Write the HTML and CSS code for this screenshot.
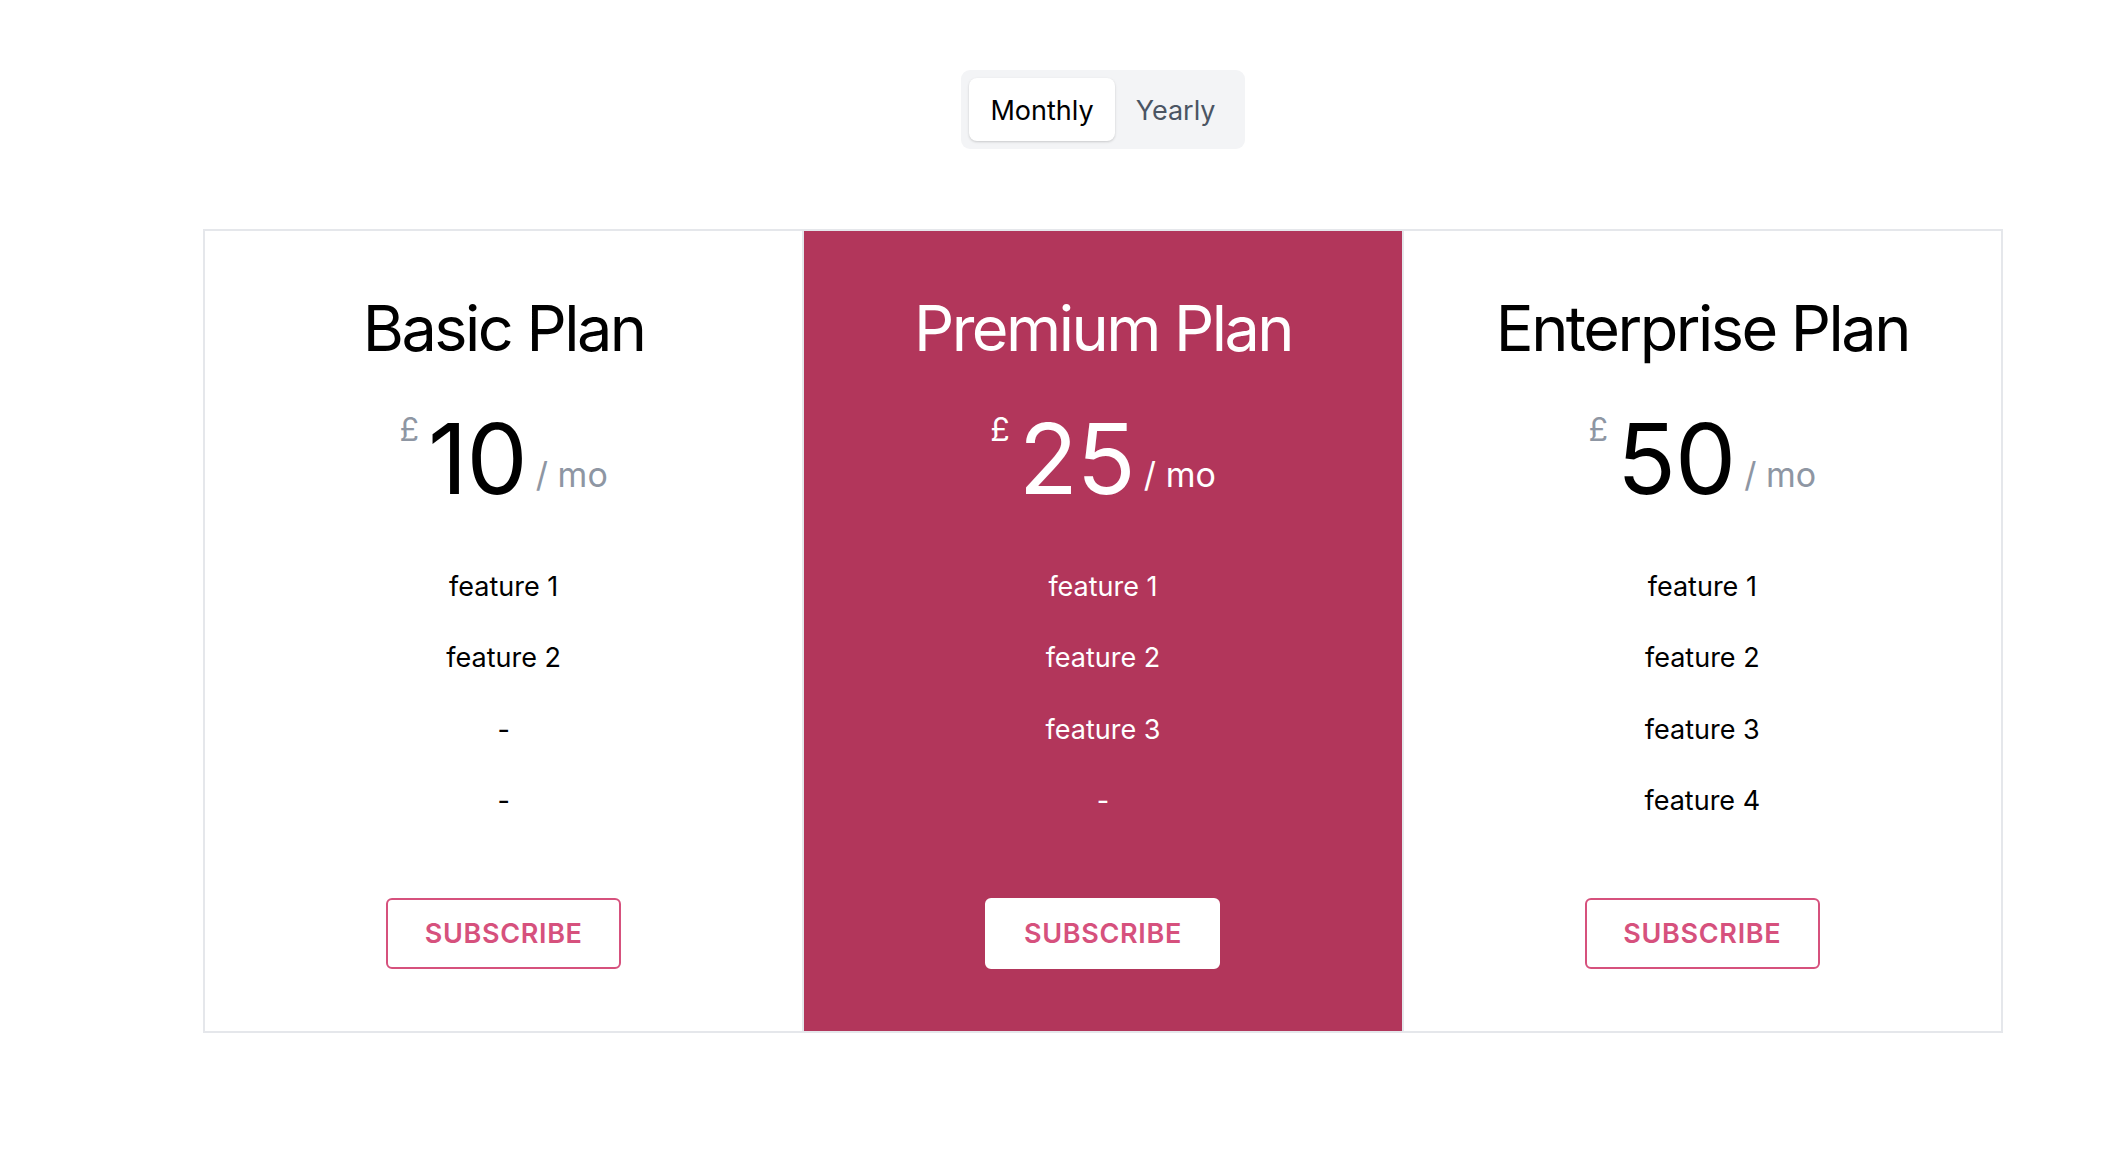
FILE: index.html
```html
<!DOCTYPE html>
<html lang="en">
<head>
<meta charset="utf-8">
<title>Pricing</title>
<link rel="stylesheet" href="styles.css">
</head>
<body>
<main class="page">
  <div class="toggle">
    <button class="toggle-btn active">Monthly</button>
    <button class="toggle-btn">Yearly</button>
  </div>

  <section class="plans">
    <div class="plan">
      <h2 class="plan-title">Basic Plan</h2>
      <div class="price">
        <span class="currency">£</span>
        <span class="amount">10</span>
        <span class="period">/ mo</span>
      </div>
      <ul class="features">
        <li>feature 1</li>
        <li>feature 2</li>
        <li>-</li>
        <li>-</li>
      </ul>
      <button class="subscribe">SUBSCRIBE</button>
    </div>

    <div class="plan featured">
      <h2 class="plan-title">Premium Plan</h2>
      <div class="price">
        <span class="currency">£</span>
        <span class="amount">25</span>
        <span class="period">/ mo</span>
      </div>
      <ul class="features">
        <li>feature 1</li>
        <li>feature 2</li>
        <li>feature 3</li>
        <li>-</li>
      </ul>
      <button class="subscribe">SUBSCRIBE</button>
    </div>

    <div class="plan">
      <h2 class="plan-title">Enterprise Plan</h2>
      <div class="price">
        <span class="currency">£</span>
        <span class="amount">50</span>
        <span class="period">/ mo</span>
      </div>
      <ul class="features">
        <li>feature 1</li>
        <li>feature 2</li>
        <li>feature 3</li>
        <li>feature 4</li>
      </ul>
      <button class="subscribe">SUBSCRIBE</button>
    </div>
  </section>
</main>
</body>
</html>
```

FILE: styles.css
```css
* { box-sizing: border-box; }

html, body {
  margin: 0;
  padding: 0;
  background: #ffffff;
}

body {
  font-family: Inter, "Noto Sans", "Liberation Sans", sans-serif;
  color: #000000;
}

.page {
  display: flex;
  flex-direction: column;
  align-items: center;
  padding: 70px 0 0 82px;
}

.toggle {
  display: flex;
  background: #f3f4f6;
  border-radius: 9px;
  padding: 8px;
}

.toggle-btn {
  font-family: inherit;
  font-size: 27px;
  line-height: 39px;
  padding: 13px 21px 11px;
  border: 0;
  border-radius: 8px;
  background: transparent;
  color: #4b5563;
  cursor: pointer;
}

.toggle-btn.active {
  background: #ffffff;
  color: #000000;
  box-shadow: 0 1px 3px rgba(0, 0, 0, 0.12), 0 1px 2px rgba(0, 0, 0, 0.06);
}

.plans {
  margin-top: 80px;
  width: 1800px;
  border: 2px solid #e5e7eb;
  background: #e5e7eb;
  display: grid;
  grid-template-columns: repeat(3, 1fr);
  gap: 2px;
}

.plan {
  background: #ffffff;
  display: flex;
  flex-direction: column;
  align-items: center;
  padding: 65px 0 62px;
  text-align: center;
}

.plan.featured {
  background: #b2365b;
  color: #ffffff;
}

.plan-title {
  margin: 0;
  font-size: 63px;
  line-height: 64.8px;
  font-weight: 400;
  letter-spacing: -0.04em;
}

.price {
  margin-top: 49px;
  display: flex;
  align-items: flex-start;
  height: 97px;
}

.currency {
  font-size: 32px;
  line-height: 1;
  margin-top: 4px;
  margin-right: 9px;
  color: #8e96a3;
}

.amount {
  font-size: 97px;
  line-height: 1;
  letter-spacing: -0.01em;
}

.period {
  align-self: flex-end;
  font-size: 34px;
  line-height: 1;
  margin-left: 9px;
  margin-bottom: 15px;
  color: #8e96a3;
}

.featured .currency,
.featured .period {
  color: #ffffff;
}

.features {
  list-style: none;
  margin: 44px 0 0;
  padding: 0;
}

.features li {
  font-size: 27px;
  line-height: 36px;
  padding: 17.75px 0;
}

.subscribe {
  margin-top: 61px;
  font-family: inherit;
  font-size: 27px;
  font-weight: 600;
  line-height: 37px;
  letter-spacing: 0.025em;
  padding: 15px 36px;
  width: 235px;
  border: 2px solid #d6517d;
  border-radius: 6px;
  background: #ffffff;
  color: #d6517d;
  cursor: pointer;
}

.featured .subscribe {
  border-color: #ffffff;
}
```
